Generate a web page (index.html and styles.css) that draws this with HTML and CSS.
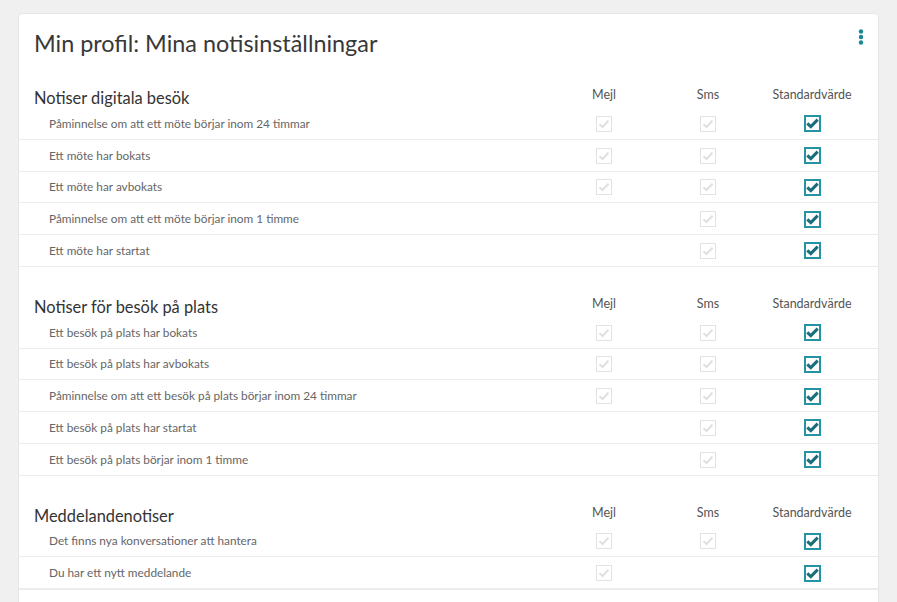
FILE: index.html
```html
<!DOCTYPE html>
<html lang="sv">
<head>
    <meta charset="UTF-8">
    <title>Min profil: Mina notisinställningar</title>
    <link rel="stylesheet" href="styles.css">
</head>
<body>

<div class="card">
    <div class="card-head">
        <h1>Min profil: Mina notisinställningar</h1>
        <button class="kebab" aria-label="Fler val">
            <svg width="6" height="16" viewBox="0 0 6 16">
                <circle cx="3" cy="2.5" r="2.2" fill="#1a8796"/>
                <circle cx="3" cy="8" r="2.2" fill="#1a8796"/>
                <circle cx="3" cy="13.5" r="2.2" fill="#1a8796"/>
            </svg>
        </button>
    </div>

    <section class="group">
        <div class="group-head">
            <h2>Notiser digitala besök</h2>
            <span class="col">Mejl</span>
            <span class="col">Sms</span>
            <span class="col">Standardvärde</span>
        </div>
        <div class="row">
            <span class="label">Påminnelse om att ett möte börjar inom 24 timmar</span>
            <span class="cell"><i class="cb off"></i></span>
            <span class="cell"><i class="cb off"></i></span>
            <span class="cell"><i class="cb on"></i></span>
        </div>
        <div class="row">
            <span class="label">Ett möte har bokats</span>
            <span class="cell"><i class="cb off"></i></span>
            <span class="cell"><i class="cb off"></i></span>
            <span class="cell"><i class="cb on"></i></span>
        </div>
        <div class="row">
            <span class="label">Ett möte har avbokats</span>
            <span class="cell"><i class="cb off"></i></span>
            <span class="cell"><i class="cb off"></i></span>
            <span class="cell"><i class="cb on"></i></span>
        </div>
        <div class="row">
            <span class="label">Påminnelse om att ett möte börjar inom 1 timme</span>
            <span class="cell"></span>
            <span class="cell"><i class="cb off"></i></span>
            <span class="cell"><i class="cb on"></i></span>
        </div>
        <div class="row">
            <span class="label">Ett möte har startat</span>
            <span class="cell"></span>
            <span class="cell"><i class="cb off"></i></span>
            <span class="cell"><i class="cb on"></i></span>
        </div>
    </section>

    <section class="group">
        <div class="group-head">
            <h2>Notiser för besök på plats</h2>
            <span class="col">Mejl</span>
            <span class="col">Sms</span>
            <span class="col">Standardvärde</span>
        </div>
        <div class="row">
            <span class="label">Ett besök på plats har bokats</span>
            <span class="cell"><i class="cb off"></i></span>
            <span class="cell"><i class="cb off"></i></span>
            <span class="cell"><i class="cb on"></i></span>
        </div>
        <div class="row">
            <span class="label">Ett besök på plats har avbokats</span>
            <span class="cell"><i class="cb off"></i></span>
            <span class="cell"><i class="cb off"></i></span>
            <span class="cell"><i class="cb on"></i></span>
        </div>
        <div class="row">
            <span class="label">Påminnelse om att ett besök på plats börjar inom 24 timmar</span>
            <span class="cell"><i class="cb off"></i></span>
            <span class="cell"><i class="cb off"></i></span>
            <span class="cell"><i class="cb on"></i></span>
        </div>
        <div class="row">
            <span class="label">Ett besök på plats har startat</span>
            <span class="cell"></span>
            <span class="cell"><i class="cb off"></i></span>
            <span class="cell"><i class="cb on"></i></span>
        </div>
        <div class="row">
            <span class="label">Ett besök på plats börjar inom 1 timme</span>
            <span class="cell"></span>
            <span class="cell"><i class="cb off"></i></span>
            <span class="cell"><i class="cb on"></i></span>
        </div>
    </section>

    <section class="group">
        <div class="group-head">
            <h2>Meddelandenotiser</h2>
            <span class="col">Mejl</span>
            <span class="col">Sms</span>
            <span class="col">Standardvärde</span>
        </div>
        <div class="row">
            <span class="label">Det finns nya konversationer att hantera</span>
            <span class="cell"><i class="cb off"></i></span>
            <span class="cell"><i class="cb off"></i></span>
            <span class="cell"><i class="cb on"></i></span>
        </div>
        <div class="row last">
            <span class="label">Du har ett nytt meddelande</span>
            <span class="cell"><i class="cb off"></i></span>
            <span class="cell"></span>
            <span class="cell"><i class="cb on"></i></span>
        </div>
    </section>
</div>

</body>
</html>
```

FILE: styles.css
```css
body {
    margin: 0;
    padding: 13px 18px 0 18px;
    background-color: #f0f0f0;
    font-family: Lato, 'Noto Sans', sans-serif;
    color: #333;
    height: 589px;
    overflow: hidden;
}

.card {
    background: #fff;
    border: 1px solid #e6e6e6;
    border-radius: 4px;
    padding-bottom: 40px;
}

.card-head {
    display: flex;
    justify-content: space-between;
    align-items: flex-start;
    padding: 14px 14px 0 15px;
}

h1 {
    margin: 0;
    font-size: 23.4px;
    font-weight: 400;
    line-height: 30px;
    color: #383838;
}

.kebab {
    border: none;
    background: none;
    padding: 1px 0 0 0;
    cursor: pointer;
    line-height: 0;
}

.group {
    margin-top: 23px;
}

.group-head,
.row {
    display: grid;
    grid-template-columns: 1fr 104px 104px 104px;
    padding: 0 14px 0 15px;
    align-items: center;
}

.group-head {
    height: 27px;
}

h2 {
    margin: 6px 0 0 0;
    font-size: 16.4px;
    font-weight: 400;
    color: #333;
}

.col {
    text-align: center;
    font-size: 12.5px;
    color: #555;
}

.row {
    height: 30.75px;
    border-bottom: 1px solid #ececec;
}

.row.last {
    border-bottom: 2px solid #ececec;
}

.label {
    padding-left: 15px;
    font-size: 11.8px;
    color: #666;
}

.cell {
    display: flex;
    justify-content: center;
    padding-top: 1px;
}

.cb {
    display: block;
    box-sizing: border-box;
    background-repeat: no-repeat;
    background-position: center;
}

.cb.off {
    width: 16px;
    height: 16px;
    border: 1px solid #e3e3e3;
    background-image: url("data:image/svg+xml,%3Csvg xmlns='http://www.w3.org/2000/svg' width='12' height='10' viewBox='0 0 12 10'%3E%3Cpath d='M1.5 5.2 L4.5 8 L10.5 1.8' fill='none' stroke='%23e0e0e0' stroke-width='2'/%3E%3C/svg%3E");
}

.cb.on {
    width: 17px;
    height: 17px;
    border: 2px solid #2593a3;
    background-image: url("data:image/svg+xml,%3Csvg xmlns='http://www.w3.org/2000/svg' width='13' height='11' viewBox='0 0 13 11'%3E%3Cpath d='M1.3 5.4 L4.8 8.6 L11.7 1.6' fill='none' stroke='%231a6d7a' stroke-width='3'/%3E%3C/svg%3E");
}
```
